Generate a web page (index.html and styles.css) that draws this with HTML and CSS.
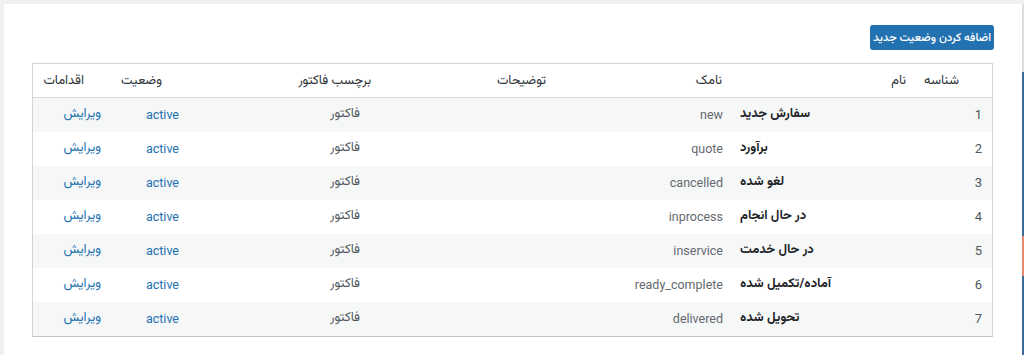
FILE: index.html
```html
<!DOCTYPE html>
<html lang="fa">
<head>
<meta charset="utf-8">
<title>وضعیت‌ها</title>
<link rel="stylesheet" href="styles.css">
</head>
<body>
<div class="page">
  <main class="panel">
    <div class="toolbar">
      <a class="btn-primary" href="#">اضافه کردن وضعیت جدید</a>
    </div>
    <div class="table">
      <div class="thead">
        <div class="th">شناسه</div>
        <div class="th">نام</div>
        <div class="th">نامک</div>
        <div class="th">توضیحات</div>
        <div class="th">برچسب فاکتور</div>
        <div class="th">وضعیت</div>
        <div class="th">اقدامات</div>
      </div>
      <div class="tr">
        <div class="td id">1</div>
        <div class="td name">سفارش جدید</div>
        <div class="td slug">new</div>
        <div class="td desc"></div>
        <div class="td label">فاکتور</div>
        <div class="td status"><a href="#">active</a></div>
        <div class="td actions"><a href="#">ویرایش</a></div>
      </div>
      <div class="tr">
        <div class="td id">2</div>
        <div class="td name">برآورد</div>
        <div class="td slug">quote</div>
        <div class="td desc"></div>
        <div class="td label">فاکتور</div>
        <div class="td status"><a href="#">active</a></div>
        <div class="td actions"><a href="#">ویرایش</a></div>
      </div>
      <div class="tr">
        <div class="td id">3</div>
        <div class="td name">لغو شده</div>
        <div class="td slug">cancelled</div>
        <div class="td desc"></div>
        <div class="td label">فاکتور</div>
        <div class="td status"><a href="#">active</a></div>
        <div class="td actions"><a href="#">ویرایش</a></div>
      </div>
      <div class="tr">
        <div class="td id">4</div>
        <div class="td name">در حال انجام</div>
        <div class="td slug">inprocess</div>
        <div class="td desc"></div>
        <div class="td label">فاکتور</div>
        <div class="td status"><a href="#">active</a></div>
        <div class="td actions"><a href="#">ویرایش</a></div>
      </div>
      <div class="tr">
        <div class="td id">5</div>
        <div class="td name">در حال خدمت</div>
        <div class="td slug">inservice</div>
        <div class="td desc"></div>
        <div class="td label">فاکتور</div>
        <div class="td status"><a href="#">active</a></div>
        <div class="td actions"><a href="#">ویرایش</a></div>
      </div>
      <div class="tr">
        <div class="td id">6</div>
        <div class="td name">آماده/تکمیل شده</div>
        <div class="td slug">ready_complete</div>
        <div class="td desc"></div>
        <div class="td label">فاکتور</div>
        <div class="td status"><a href="#">active</a></div>
        <div class="td actions"><a href="#">ویرایش</a></div>
      </div>
      <div class="tr">
        <div class="td id">7</div>
        <div class="td name">تحویل شده</div>
        <div class="td slug">delivered</div>
        <div class="td desc"></div>
        <div class="td label">فاکتور</div>
        <div class="td status"><a href="#">active</a></div>
        <div class="td actions"><a href="#">ویرایش</a></div>
      </div>
    </div>
  </main>
  <div class="edge">
    <div class="edge-top"></div>
    <div class="edge-blue"></div>
    <div class="edge-orange"></div>
    <div class="edge-blue grow"></div>
  </div>
</div>
</body>
</html>
```

FILE: styles.css
```css
* { box-sizing: border-box; }

html, body {
  margin: 0;
  height: 100%;
}

body {
  background: #f0f0f1;
  font-family: Roboto, "Vazirmatn", "Noto Sans Arabic", "DejaVu Sans", sans-serif;
  font-size: 13px;
  color: #3c434a;
  overflow: hidden;
}

.page {
  display: flex;
  height: 100%;
  padding: 4px 0 0 4px;
}

.panel {
  flex: 1;
  background: #fff;
  direction: rtl;
  padding: 21px 29px 0 28px;
  display: flex;
  flex-direction: column;
  gap: 13px;
}

.toolbar {
  display: flex;
  justify-content: flex-start;
}

.btn-primary {
  display: flex;
  align-items: center;
  justify-content: center;
  width: 124px;
  height: 25px;
  background: #2271b1;
  color: #fff;
  border-radius: 3px;
  text-decoration: none;
  font-size: 11.5px;
  font-weight: 500;
  margin-right: -1px;
}

.table {
  border: 1px solid #d3d4d6;
  border-bottom-color: #c3c4c7;
}

.thead {
  display: grid;
  grid-template-columns: 53px 184px 176px 175px 209px 78px 61px;
  height: 34px;
  padding-right: 23px;
  border-bottom: 1px solid #dcdcde;
  align-items: center;
  color: #2c3338;
  font-size: 13px;
}

.th {
  padding-right: 10px;
  text-align: right;
  white-space: nowrap;
}

.tr {
  display: grid;
  grid-template-columns: 153px 106px 174px 1fr 181px 78px 78px;
  height: 34px;
  padding-bottom: 2px;
  align-items: center;
}

.tr:nth-child(even) {
  background: #f6f7f7;
}

.td {
  padding-right: 10px;
  text-align: right;
  white-space: nowrap;
}

.td.id {
  color: #50575e;
}

.td.name {
  text-align: left;
  padding: 0 0 0 7px;
  font-weight: 700;
  color: #1d2327;
  font-size: 13px;
}

.td.slug {
  color: #646970;
  font-size: 12.5px;
}

.td.label {
  color: #50575e;
  font-size: 13px;
}

.td a {
  color: #2271b1;
  text-decoration: none;
}

.td.status a {
  font-size: 12.5px;
}

.td.actions a {
  font-size: 13px;
}

.edge {
  width: 2px;
  display: flex;
  flex-direction: column;
}

.edge-top {
  height: 68px;
  background: #dcdcde;
}

.edge-blue {
  height: 164px;
  background: #3b6c99;
}

.edge-orange {
  height: 40px;
  background: #e8876a;
}

.edge-blue.grow {
  flex: 1;
  height: auto;
}
```
